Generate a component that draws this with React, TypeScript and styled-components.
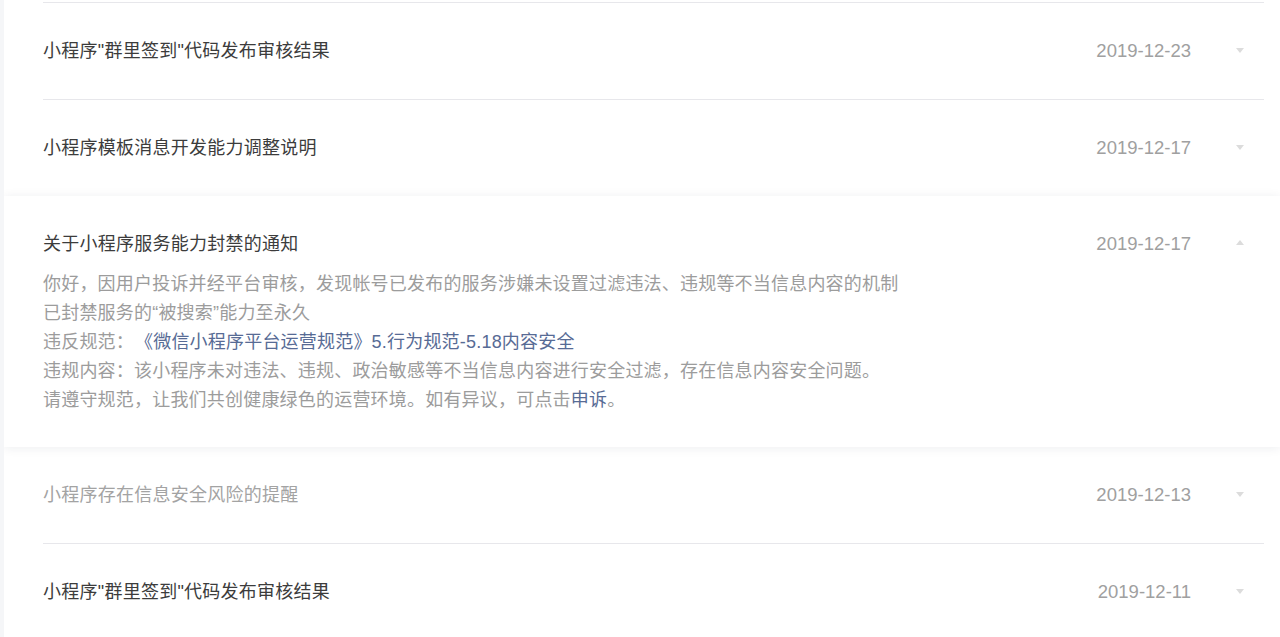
import styled, { createGlobalStyle } from 'styled-components'

const GlobalStyle = createGlobalStyle`
  html, body {
    margin: 0;
    padding: 0;
    background: #f5f6f8;
  }
  body {
    font-family: "Liberation Sans", "Noto Sans CJK SC", sans-serif;
  }
`

const Page = styled.div`
  margin-left: 4px;
  min-height: 637px;
  background: #fff;
  padding: 2px 16px 0 39px;
  overflow: hidden;
`

const List = styled.div`
  display: flex;
  flex-direction: column;
  border-top: 1px solid #e7e7eb;
`

const Row = styled.div`
  display: flex;
  align-items: center;
  justify-content: space-between;
  height: 96px;
  border-bottom: 1px solid #e7e7eb;
`

const Card = styled.div`
  margin: -1px -16px 0 -39px;
  padding: 36px 16px 32px 39px;
  background: #fff;
  box-shadow: 0 1px 10px rgba(30, 40, 60, 0.08);
  position: relative;
  z-index: 1;
`

const CardHead = styled.div`
  display: flex;
  align-items: center;
  justify-content: space-between;
  height: 24px;
`

const Title = styled.div<{ $read?: boolean }>`
  font-size: 18px;
  font-weight: 400;
  letter-spacing: 0.25px;
  line-height: 24px;
  color: ${(p) => (p.$read ? '#a3a3a3' : '#3c3c3c')};
`

const Meta = styled.div`
  display: flex;
  align-items: center;
  gap: 45px;
  padding-right: 20px;
`

const Date = styled.span`
  font-family: "Liberation Sans", Arial, sans-serif;
  font-size: 18.5px;
  color: #a0a0a0;
`

const Arrow = styled.span<{ $up?: boolean }>`
  width: 0;
  height: 0;
  border-left: 4.5px solid transparent;
  border-right: 4.5px solid transparent;
  ${(p) => (p.$up ? 'border-bottom: 5px solid #dcdcdc;' : 'border-top: 5px solid #dcdcdc;')}
  margin-top: ${(p) => (p.$up ? '-4px' : '-2px')};
`

const Body = styled.div`
  margin-top: 14px;
  font-size: 18px;
  letter-spacing: 0.2px;
  line-height: 29px;
  color: #9c9c9c;
`

const Link = styled.a<{ $gap?: boolean }>`
  color: #576b95;
  text-decoration: none;
  margin-left: ${(p) => (p.$gap ? '10px' : '0')};
`

const items = [
  { title: '小程序"群里签到"代码发布审核结果', date: '2019-12-23' },
  { title: '小程序模板消息开发能力调整说明', date: '2019-12-17' },
]

const after = [
  { title: '小程序存在信息安全风险的提醒', date: '2019-12-13', read: true },
  { title: '小程序"群里签到"代码发布审核结果', date: '2019-12-11' },
]

const App = () => {
  return (
    <>
      <GlobalStyle />
      <Page>
        <List>
          {items.map((it, i) => (
            <Row key={i}>
              <Title>{it.title}</Title>
              <Meta>
                <Date>{it.date}</Date>
                <Arrow />
              </Meta>
            </Row>
          ))}
          <Card>
            <CardHead>
              <Title>关于小程序服务能力封禁的通知</Title>
              <Meta>
                <Date>2019-12-17</Date>
                <Arrow $up />
              </Meta>
            </CardHead>
            <Body>
              <div>你好，因用户投诉并经平台审核，发现帐号已发布的服务涉嫌未设置过滤违法、违规等不当信息内容的机制</div>
              <div>已封禁服务的“被搜索”能力至永久</div>
              <div>
                违反规范：<Link href="#" $gap>《微信小程序平台运营规范》5.行为规范-5.18内容安全</Link>
              </div>
              <div>违规内容：该小程序未对违法、违规、政治敏感等不当信息内容进行安全过滤，存在信息内容安全问题。</div>
              <div>
                请遵守规范，让我们共创健康绿色的运营环境。如有异议，可点击<Link href="#">申诉</Link>。
              </div>
            </Body>
          </Card>
          {after.map((it, i) => (
            <Row key={i}>
              <Title $read={it.read}>{it.title}</Title>
              <Meta>
                <Date>{it.date}</Date>
                <Arrow />
              </Meta>
            </Row>
          ))}
        </List>
      </Page>
    </>
  )
}

export default App
